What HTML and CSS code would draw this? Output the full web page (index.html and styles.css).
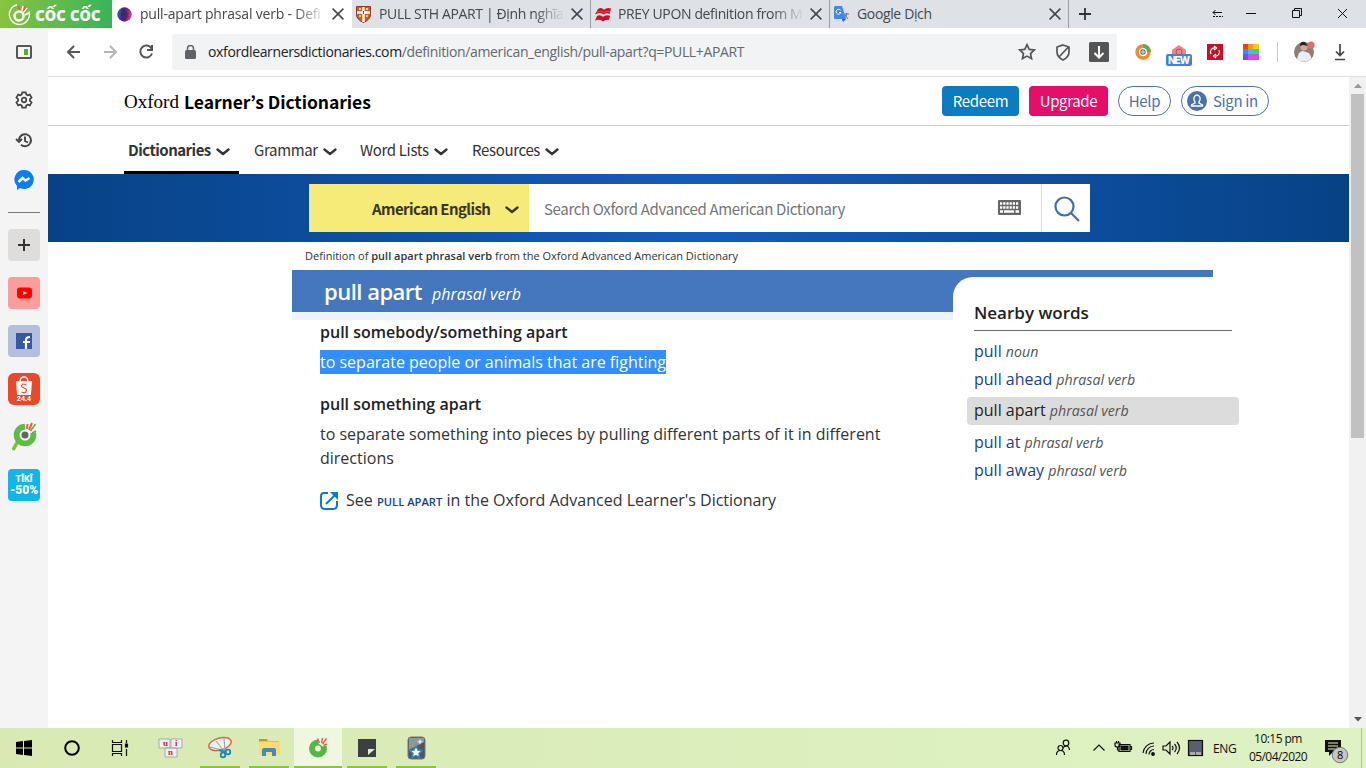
FILE: index.html
```html
<!DOCTYPE html>
<html lang="en">
<head>
<meta charset="utf-8">
<title>pull-apart phrasal verb - Definition</title>
<link rel="stylesheet" href="styles.css">
</head>
<body>
<svg width="0" height="0" class="defs">
  <symbol id="x" viewBox="0 0 12 12"><path d="M.6.6l10.8 10.8M11.4.6L.6 11.4" fill="none" stroke="#444" stroke-width="1.5"/></symbol>
  <symbol id="chev" viewBox="0 0 14 8"><path d="M1.500 1.500L7 6L12.500 1.500" fill="none" stroke="currentColor" stroke-width="2.300" stroke-linecap="round" stroke-linejoin="round"/></symbol>
</svg>
<div class="screen">
  <header class="tabs">
    <div class="brand"><svg width="23" height="23" viewBox="0 0 23 23" fill="none" stroke="#fff"><path d="M9 1.700a10 10 0 1 0 12 7" stroke-width="1.400"/><circle cx="11" cy="13" r="4.500" stroke-width="2.500"/><path d="M14 8l1-5M15 10l4-5M17 12l5-3" stroke-width="1.500"/><path d="M12 7l-2-4M15 8l3-5" stroke="#ef5a45" stroke-width="1.600"/></svg><span>cốc cốc</span></div>
    <div class="tab active"><svg width="15" height="15" viewBox="0 0 15 15"><defs><linearGradient id="ball" x2="1" y2=".2"><stop offset=".1" stop-color="#2c5eb0"/><stop offset=".5" stop-color="#45257c"/><stop offset="1" stop-color="#d52e79"/></linearGradient></defs><circle cx="7.500" cy="7.500" r="7.200" fill="url(#ball)"/><path d="M5 2q6 0 6 7l-3 5-4-5z" fill="#2c2766" opacity=".6"/></svg><span class="tt t1">pull-apart phrasal verb - Defi</span><svg class="close"><use href="#x"/></svg></div>
    <div class="tab"><svg width="15" height="17" viewBox="0 0 15 17"><path d="M.5.5h14v8q0 5-7 8-7-3-7-8z" fill="#d45b29" stroke="#8d3326"/><path d="M7.500 1v15M1 6.500h13" stroke="#fff" stroke-width="2.400"/><path d="M3 3h2M10 3h2M3 10h2M10 10h2" stroke="#f4cf52" stroke-width="2"/><path d="M7 5h1v3H7z" fill="#b23"/></svg><span class="tt t2">PULL STH APART | Định nghĩa</span><svg class="close"><use href="#x"/></svg></div>
    <div class="tab"><svg width="17" height="15" viewBox="0 0 17 15"><path d="M3 2q3-2 5 0l1 .8Q12 0 16 1.500L14.500 7Q12 5.500 9 7.500 5 4.500 0 7.500zM2 9q3-2 6 .8 3-2.500 7-1L14 13q-3-1-6 1.500-3-3-8-.8z" fill="#cc1028"/><path d="M2 5q4-2 7 .500 3-2 6-1" fill="none" stroke="#e3909e" stroke-width=".5"/></svg><span class="tt t3">PREY UPON definition from M</span><svg class="close"><use href="#x"/></svg></div>
    <div class="tab"><svg width="16" height="16" viewBox="0 0 16 16"><path d="M6 5h9v10H9z" fill="#d9dce0"/><path d="M1 0h7l4 13H1q-1 0-1-1V1z" fill="#4285f4"/><path d="M8 13h4l-3 3z" fill="#2459b8"/><path d="M6.800 4.500A2.500 2.500 0 1 0 7 6.500H5" fill="none" stroke="#fff"/><path d="M10 8h5M12.500 7v1q0 3-2 4M11 9l3 4" fill="none" stroke="#6b7780"/></svg><span class="tt t4">Google Dịch</span><svg class="close"><use href="#x"/></svg></div>
    <svg class="plus" width="12" height="12"><path d="M6 0v12M0 6h12" stroke="#333" stroke-width="1.800"/></svg>
    <svg class="wctl" width="140" height="28" fill="none" stroke="#111"><path d="M1 12.500h9M3.500 10l-2.500 2.500 2.500 2.500"/><path d="M1 16.500h10" stroke-dasharray="2 1"/><path d="M34 13.500h10M80.500 10.500h7v7h-7zM82.500 10v-1.500h7v7H88M126 9l9 9M135 9l-9 9"/></svg>
  </header>
  <div class="middle">
    <aside class="side">
      <div class="si"><svg width="16" height="16"><rect x="1" y="2" width="14" height="12" rx="1" fill="none" stroke="#555" stroke-width="2"/><path d="M8 5h4v6H8z" fill="#50b02f"/></svg></div>
      <div class="si s16"><svg width="18" height="18" viewBox="0 0 18 18" fill="none" stroke="#444" stroke-width="1.700"><path d="M7.200 1.300h3.600l.5 2.200 1.300.8 2.200-.7 1.800 3-1.700 1.600v1.600l1.700 1.600-1.800 3-2.200-.7-1.300.8-.5 2.200H7.200l-.5-2.200-1.300-.8-2.200.7-1.800-3 1.700-1.600V8.200L1.400 6.600l1.800-3 2.200.7 1.300-.8z"/><circle cx="9" cy="9" r="2.300"/></svg></div>
      <div class="si s8"><svg width="18" height="16" viewBox="0 0 18 16" fill="none" stroke="#444" stroke-width="1.900"><path d="M4 8a6 6 0 1 1 2 4.700M1 7l3 3 3-3M10 4.500V9l3 1.500"/></svg></div>
      <div class="si s8"><svg width="20" height="21" viewBox="0 0 20 21"><path d="M10 0a9.500 9.500 0 1 1-4 18l-3 2v-4A9.500 9.500 0 0 1 10 0z" fill="#087efb"/><path d="M4.500 12l4-4 3 2.500L15.500 8" fill="none" stroke="#fff" stroke-width="2.500"/></svg></div>
      <i class="rule"></i>
      <div class="si box add"><svg width="12" height="12"><path d="M6 0v12M0 6h12" stroke="#333" stroke-width="2"/></svg></div>
      <div class="si s16 box yt"><svg width="15" height="12"><rect y=".5" width="15" height="11" rx="3" fill="#f00"/><path d="M6 4l4 2-4 2z" fill="#fff"/></svg></div>
      <div class="si s16 box fb"><svg width="16" height="16"><path d="M0 0h16v16H0z" fill="#3758a5"/><path d="M10 16V7q0-3 4-3M7 9h7" fill="none" stroke="#fff" stroke-width="2.200"/></svg></div>
      <div class="si s16 box shop"><svg width="18" height="19" viewBox="0 0 18 19"><path d="M1 5h16l-1 14H2z" fill="#fff"/><path d="M5 6q0-5 4-5t4 5" fill="none" stroke="#fff" stroke-width="1.500"/><path d="M11.500 9Q8 7 6.800 9t2.200 3 2 3.500-4.500.5" fill="none" stroke="#ea4828" stroke-width="1.200"/></svg><b>24.4</b></div>
      <div class="si s16"><svg width="25" height="30" viewBox="0 0 25 30"><path d="M6 19l-5 9" stroke="#82bd3e" stroke-width="3.500"/><circle cx="13" cy="13" r="7.800" fill="none" stroke="#5fbb48" stroke-width="7"/><path d="M14 12L12.500 0H25v10z" fill="#f4f4f4"/><circle cx="13" cy="13" r="4.500" fill="#626466" stroke="#f4f4f4" stroke-width="2"/><path d="M15 7l.5-5M17 8l3-7" stroke="#f0594c" stroke-width="2"/><path d="M18.500 9l5-7M20 11l4-2" stroke="#50b748" stroke-width="1.600"/></svg></div>
      <div class="si s16 box tiki"><b>TÎKÎ</b><strong>-50%</strong></div>
    </aside>
    <main class="browser">
      <div class="toolbar">
        <svg class="navs" width="124" height="48" fill="none" stroke="#555" stroke-width="2"><path d="M32 24H20M26 18l-6 6 6 6"/><path d="M56 24h12M62 18l6 6-6 6" stroke="#b5b5b5"/><path d="M103.500 20.500a6 6 0 1 0 .5 5M104 17v5h-5"/></svg>
        <div class="address"><svg width="12" height="14"><rect y="5" width="11" height="9" rx="1.500" fill="#5f6368"/><path d="M2.500 6V3.500a3 3 0 0 1 6 0V6" fill="none" stroke="#5f6368" stroke-width="1.500"/></svg><span class="url"><b>oxfordlearnersdictionaries.com</b>/definition/american_english/pull-apart?q=PULL+APART</span>
        <svg class="marks" width="96" height="24" viewBox="0 0 96 24" fill="none" stroke="#555" stroke-width="1.700"><path d="M12 4.700l2.200 4.700 5.100.6-3.800 3.500 1 5.100-4.500-2.500-4.500 2.500 1-5.100L4.700 10l5.100-.6z"/><path d="M48 5l6 2v5q0 5-6 8-6-3-6-8V7zM43.500 17.500L53 7.500"/><rect x="74" y="2" width="20" height="20" rx="1.500" fill="#555" stroke="none"/><path d="M84 6v11M79.500 13l4.500 4.500 4.500-4.500" stroke="#fff" stroke-width="2"/></svg></div>
        <svg class="ext" width="236" height="40" viewBox="0 0 236 40"><circle cx="12" cy="20" r="6" fill="none" stroke="#f38b2e" stroke-width="3.500"/><path d="M12 14a6 6 0 0 1 6 6" fill="none" stroke="#59ad51" stroke-width="4"/><circle cx="12" cy="20" r="2.700" fill="#607070"/><path d="M10 20h4M12 18v4" stroke="#ddd"/><path d="M41 23v-5l7-5 7 5v5z" fill="#f38282"/><circle cx="48" cy="20" r="3" fill="none" stroke="#b84e56"/><rect x="35" y="22" width="26" height="12" rx="2" fill="#427eea"/><text x="37" y="32" textLength="22">NEW</text><path d="M76 12h16v16H76z" fill="#c61128"/><path d="M80 22a4 4 0 0 1 4-6M83 14l2.500 2L83 18M88 18a4 4 0 0 1-4 6M85 22l-2.500 2 2.500 2" stroke="#fff" fill="none" stroke-width="1.300"/><path d="M112 12h5v5h-5z" fill="#f83b1d"/><path d="M117 12h5v5h-5z" fill="#ff991b"/><path d="M122 12h6v5h-6z" fill="#f7ca1e"/><path d="M112 17h5v5h-5z" fill="#179dfa"/><path d="M117 17h5v5h-5z" fill="#21cdea"/><path d="M122 17h6v5h-6z" fill="#32dc66"/><path d="M112 22h5v6h-5z" fill="#784cea"/><path d="M117 22h11v6h-11z" fill="#d949ef"/><path d="M146.500 10v20" stroke="#c8c8c8"/><g transform="translate(2)"><circle cx="171" cy="20" r="10" fill="#927b74"/><path d="M164 28q1-9 6-9l6 2q3 4 2 6-6 5-14 1z" fill="#e9ecf0"/><circle cx="171" cy="15" r="3.500" fill="#d9a995"/><path d="M167 14q0-5 5-4l3 4-5-1z" fill="#26242a"/><circle cx="178" cy="13" r="3.500" fill="#f3636b"/></g><path d="M209 12v12M205 19.500l4 4 4-4M204 27.500h10" fill="none" stroke="#444" stroke-width="1.700"/></svg>
      </div>
      <div class="viewport">
        <div class="page">
          <div class="mast"><div class="logo"><span class="ox">Oxford</span><b>Learner’s Dictionaries</b></div>
            <div class="acts"><a class="btn redeem">Redeem</a><a class="btn upgrade">Upgrade</a><a class="btn help">Help</a><a class="btn sign"><svg width="20" height="20"><circle cx="10" cy="10" r="10" fill="#4a72a8"/><path d="M8 11Q6.500 9 7 6.500 8 4 10 4t3 2.500Q13.500 9 12 11v1l3.500 2v1h-11v-1L8 12z" fill="none" stroke="#fff" stroke-width="1.300"/></svg><span>Sign in</span></a></div></div>
          <nav class="nav"><a class="on n1"><span>Dictionaries</span><svg><use href="#chev"/></svg></a><a class="n2"><span>Grammar</span><svg><use href="#chev"/></svg></a><a class="n3"><span>Word Lists</span><svg><use href="#chev"/></svg></a><a class="n4"><span>Resources</span><svg><use href="#chev"/></svg></a></nav>
          <div class="band"><div class="search"><div class="lang"><span>American English</span><svg><use href="#chev"/></svg></div><div class="query"><span>Search Oxford Advanced American Dictionary</span><svg width="23" height="16"><rect y="0" width="23" height="15" rx="1" fill="#666"/><path d="M2 3.500h19M2 7.500h19" stroke="#fff" stroke-width="2.600" stroke-dasharray="2.200 1"/><path d="M2 11.500h3M6 11.500h10M17.500 11.500h3.500" stroke="#fff" stroke-width="2.400"/></svg></div><div class="go"><svg width="26" height="26" fill="none" stroke="#3f70ae" stroke-width="2.200"><circle cx="10.500" cy="10.500" r="9"/><path d="M17 17l8 8"/></svg></div></div></div>
          <p class="crumb"><span>Definition of <b>pull apart phrasal verb</b> from the Oxford Advanced American Dictionary</span></p>
          <div class="entry">
            <section class="def"><h1><span class="hw">pull apart</span><i>phrasal verb</i></h1>
              <h2 class="h2a"><span>pull somebody/something apart</span></h2><p class="selp"><mark>to separate people or animals that are fighting</mark></p>
              <h2 class="h2b"><span>pull something apart</span></h2><p class="body">to separate something into pieces by pulling different parts of it in different<br>directions</p>
              <p class="see"><svg width="18" height="19" viewBox="0 0 18 19" fill="none" stroke="#0b7bc8" stroke-width="2"><path d="M8 2H4Q1 2 1 5v9q0 4 4 4h8q4 0 4-4v-4M6 13L15 4"/><path d="M10 1h8v8z" fill="#0b7bc8" stroke="none"/></svg><span>See <a>PULL APART</a> in the Oxford Advanced Learner's Dictionary</span></p>
            </section>
            <aside class="near"><h3>Nearby words</h3><ul><li><a>pull</a> <i>noun</i></li><li><a>pull ahead</a> <i>phrasal verb</i></li><li class="cur"><a>pull apart</a> <i>phrasal verb</i></li><li><a>pull at</a> <i>phrasal verb</i></li><li><a>pull away</a> <i>phrasal verb</i></li></ul></aside>
          </div>
        </div>
        <div class="scroll"><svg width="17" height="17"><path d="M5 11l4-4.500L13 11z" fill="#999"/></svg><div class="thumb"></div><svg width="17" height="17"><path d="M5 6h8l-4 4.500z" fill="#555"/></svg></div>
      </div>
    </main>
  </div>
  <footer class="task">
    <svg class="t48" viewBox="0 0 48 40"><path d="M16 14l7-1v6.500h-7zM24 13l8-1v7.500h-8zM16 20.500h7V27l-7-1zM24 20.500h8V28l-8-1z"/></svg>
    <svg class="t48" viewBox="0 0 48 40"><circle cx="24" cy="20" r="6.800" fill="none" stroke="#000" stroke-width="2"/></svg>
    <svg class="t48" viewBox="0 0 48 40" fill="none" stroke="#111" stroke-width="1.200"><path d="M16.500 16.500h9v7h-9zM16.500 12v2.500h9V12M16.500 28v-2.500h9V28M30.500 12v3M30.500 21v7"/><path d="M29.500 16h2v3h-2z" fill="#111"/></svg>
    <svg class="t52" viewBox="0 0 52 40"><g fill="#eef0f1" stroke="#a8aaac"><path d="M15 11h11v9H15zM27 11h11v9H27zM21 20h12v9H21z"/></g><text x="19" y="18">u</text><text x="31" y="18">i</text><text x="24" y="27">n</text></svg>
    <svg class="t48 run" viewBox="0 0 48 40"><ellipse cx="24" cy="16" rx="11.500" ry="6" transform="rotate(-15 24 16)" fill="#edf3ef" stroke="#e4604f" stroke-width="1.400"/><path d="M20 13l8 10M28 10l1 13M14 19l12 3" stroke="#9aa6ac" stroke-width="1.200"/><circle cx="27" cy="27" r="2.300" fill="none" stroke="#168bb4" stroke-width="1.800"/><circle cx="32" cy="24" r="2.300" fill="none" stroke="#168bb4" stroke-width="1.800"/><path d="M23 22l6 2" stroke="#168bb4" stroke-width="2"/></svg>
    <svg class="t48 run" viewBox="0 0 48 40"><path d="M14 11h8l2 2h10v14H14z" fill="#f2be38"/><path d="M14 14h21v13H14z" fill="#ffdb6b"/><path d="M14 11h8v2h-8z" fill="#c9971c"/><path d="M17 28v-6q0-2 2-2h10q2 0 2 2v6h-4v-4h-6v4z" fill="#398bd1"/></svg>
    <svg class="t48 cur" viewBox="0 0 48 40"><circle cx="24" cy="20.500" r="6" fill="none" stroke="#50b748" stroke-width="6"/><path d="M25 18l-1-8h9v7.500l-5 1z" fill="#eff7e0"/><circle cx="24" cy="20.500" r="3.700" fill="#eff7e0" stroke="#50b748" stroke-width="1.600"/><path d="M25.500 15l-2-4.500M27.500 15l1-5M28.500 16l4-5.500M29.500 17.500l3.500-1.500" stroke="#f0594c" stroke-width="1.400"/></svg>
    <svg class="t48 run" viewBox="0 0 48 40"><path d="M33 11v18H15V11z" fill="#3c4040"/><path d="M25 27v-6h7z" fill="#e2f1c4"/></svg>
    <svg class="t48 run" viewBox="0 0 48 40"><rect x="16" y="9" width="17" height="22" rx="3" fill="#50565a" stroke="#777"/><path d="M17 10h15v4L17 22z" fill="#90979a"/><path d="M24 18l2 4 4 .5-3 3 .5 4-3.500-2-4 2 1-4-3-3 4-.5z" fill="#fff" stroke="#2988c8" stroke-width="1.500"/><path d="M28 11l1 2 2 .5-2 1-1 2-1-2-2-1 2-.5z" fill="#d7effd"/></svg>
    <svg class="tray" width="157" height="40" fill="none" stroke="#111" stroke-width="1.200"><circle cx="10" cy="15" r="2.800"/><circle cx="4.500" cy="20" r="2.500"/><path d="M.5 27q0-4.500 4-4.500t4 4.500M7 20q1-2 3.500-2t3 4"/><path d="M37.500 22.500l5.500-5.500 5.500 5.500"/><path d="M63 16.500h11v7H63zM74 18.500h1.500v3H74"/><path d="M65 18h7v4h-7z" fill="#111"/><path d="M59 15h5v2q0 2-2.500 2T59 17zM60.500 13v2M62.500 13v2M61.500 19v3h2"/><path d="M87 25a11 11 0 0 1 11-10M90 26a8 8 0 0 1 8-8M93 26.500a5 5 0 0 1 5-5"/><circle cx="97" cy="26" r="1.300" fill="#111"/><path d="M107 18h3l4-4v12l-4-4h-3zM116 18q2 2 0 4M118.500 16q3.500 4 0 8M121 14q5 6 0 12"/><rect x="132.500" y="12.500" width="14" height="15" fill="#59606c"/><path d="M134 24h5v3h-5zM140 24h5v3h-5z" fill="#aaa" stroke="none"/></svg>
    <span class="eng">ENG</span><div class="clock"><span>10:15 pm</span><span>05/04/2020</span></div>
    <svg class="notify" width="42" height="40"><path d="M1 12h16v12H9l-4 4v-4H1z" fill="#111"/><path d="M4 15h10M4 18h10M4 21h7" stroke="#dff1c5"/><circle cx="16" cy="27" r="7.700" fill="#c5c9bf" stroke="#777"/><text x="13" y="31">8</text><path d="M37.500 0v40" stroke="#b0bc9e"/></svg>
  </footer>
</div>
</body>
</html>
```
FILE: styles.css
```css
*{box-sizing:border-box}
body{margin:0;background:#fff;font-family:"Open Sans","Noto Sans",sans-serif;color:#333;overflow:hidden}
svg{display:block;flex:none}
.defs{position:absolute}
p,h1,h2,h3,ul{margin:0;padding:0}
.screen{width:1366px;height:768px;display:flex;flex-direction:column}
.tabs{height:28px;background:#dee1e6;display:flex;align-items:center;flex:none}
.brand{width:112px;height:28px;background:linear-gradient(100deg,#8ac43d,#35b45a);display:flex;align-items:center;gap:4px;padding-left:8px;color:#fff;font:700 19px/29px "Noto Sans",sans-serif;flex:none}
.brand span{white-space:nowrap;letter-spacing:-.4px}
.tab{width:239px;height:28px;display:flex;align-items:center;padding:0 7px 0 4px;border-right:1px solid #9a9da2;background:#dee1e6;flex:none}
.tab.active{width:240px;background:#fff;padding:0 8px 0 5px;border:0}
.tt{flex:1;margin:0 0 0 8px;height:28px;line-height:27px;font-size:14px;letter-spacing:-.36px;white-space:nowrap;color:#45474b}
.t1{letter-spacing:-.2px}
.t1,.t2,.t3{-webkit-mask-image:linear-gradient(90deg,#000 155px,transparent 186px)}
.t3{margin-left:6px}.t4{margin-left:7px}
.close{width:12px;height:12px}
.plus{margin-left:10px}
.wctl{margin-left:auto;margin-right:14px}
.middle{height:700px;display:flex;flex:none}
.side{width:48px;background:#f4f4f4;padding-top:8px;display:flex;flex-direction:column;align-items:center;flex:none}
.si{width:32px;height:32px;display:flex;align-items:center;justify-content:center;flex:none}
.s16{margin-top:16px}.s8{margin-top:8px}
.rule{width:32px;height:1px;background:#777;margin:16px 0}
.box{border-radius:4px}
.add{background:#dfdddb}.yt{background:#f99d9d}.fb{background:#b3bfdc}
.shop{background:#ea4828;border-radius:6px;flex-direction:column;color:#fff;font:700 7px/8px Roboto,sans-serif}
.tiki{background:#10b5ec;flex-direction:column;color:#fff;font:900 9px/10px Roboto,sans-serif}
.tiki strong{font-size:12px;line-height:13px}
.browser{width:1318px}
.toolbar{height:49px;display:flex;align-items:center;border-bottom:1px solid #ddd}
.address{width:945px;height:36px;background:#f1f3f4;border-radius:3px;display:flex;align-items:center;padding:0 6px 0 13px;flex:none}
.url{flex:1;margin-left:11px;font-size:14px;line-height:32px;letter-spacing:-.36px;color:#65686c;white-space:nowrap}
.url b{font-weight:400;color:#202124}
.ext{margin-left:14px}
.ext text{font:800 10px Inter,sans-serif;fill:#fff}
.viewport{height:651px;display:flex}
.page{width:1301px}
.mast,.nav,.btn,.lang,.query{font-family:"Noto Sans CJK KR","Noto Sans CJK JP",sans-serif}
.mast{height:49px;border-bottom:1px solid #ccc;display:flex;justify-content:space-between;padding:0 80px 0 76px;align-items:center}
.logo{color:#000;font-size:17.500px;display:flex;line-height:48px;white-space:nowrap;gap:5px;letter-spacing:-.06px;padding-top:2px}
.ox{font-family:"Liberation Serif",serif;font-size:19px;width:55px;letter-spacing:0}
.acts{display:flex;gap:10px}
.btn{height:30px;line-height:29px;font-size:15px;border-radius:4px;color:#fff;text-align:center;white-space:nowrap;letter-spacing:-.35px}
.redeem{background:#0c7bc0;width:77px}.upgrade{background:#e60e69;width:79px}
.help{border:1px solid #4a72a8;border-radius:15px;width:53px;color:#4a72a8;line-height:28px}
.sign{border:1px solid #4a72a8;border-radius:15px;width:88px;color:#4a72a8;line-height:28px;display:flex;align-items:center;gap:6px;padding-left:5px}
.nav{height:48px;display:flex;padding-left:76px;font-size:15px;letter-spacing:-.35px}
.nav a{height:48px;display:flex;align-items:center;gap:5px;line-height:48px;white-space:nowrap}
.nav svg{width:14px;height:8px;margin-top:3px}
.nav .on{width:115px;border-bottom:3px solid #000;font-weight:700;padding-left:4px;padding-top:3px;margin-right:15px;letter-spacing:-.52px}
.n2{width:106px}.n3{width:112px}
.band{height:68px;background:linear-gradient(90deg,#074286,#145cbb 50%,#074286);padding:10px 0 0 261px}
.search{height:48px;width:781px;display:flex;background:#fff}
.lang{width:220px;background:#f6ea79;display:flex;align-items:center;padding-left:63px;font-size:15px;font-weight:700;color:#3b3520;white-space:nowrap;letter-spacing:-.58px}
.lang span{width:118px}
.lang svg{width:14px;height:8px;margin:4px 0 0 15px}
.query{width:512px;padding-left:15px;display:flex;align-items:center;font-size:15px;color:#757575;white-space:nowrap;letter-spacing:-.35px}
.query span{width:454px}
.go{width:49px;border-left:1px solid #ddd;padding:12px 0 0 12px}
.crumb{height:28px;line-height:28px;font-size:11px;padding-left:257px;white-space:nowrap}
.crumb b{font-weight:600}
.entry{width:947px;margin-left:244px;display:flex;background:linear-gradient(#4577bf,#4577bf) 0 0/921px 42px no-repeat,linear-gradient(#ebf3fd,#ebf3fd) 0 42px/661px 8px no-repeat}
.def{width:661px;font-size:16px;line-height:24px;padding-left:28px;white-space:nowrap}
h1{height:50px;padding-left:4px;color:#fff;line-height:43px;font-size:22px;font-weight:600;display:flex}
.hw{letter-spacing:-.5px}
h1 i{font-size:16px;font-weight:400;line-height:48px;margin-left:10px}
h2{font-size:16px;line-height:24px;font-weight:600;color:#222}
.selp{margin-top:6px}
mark{background:#338fff;color:#fff;display:inline-block;height:24px}
.h2b{margin-top:18px}.body{margin-top:6px}
.see{margin-top:18px;display:flex;align-items:center;gap:8px}
.see svg{margin-top:-2px}
.see a{font-size:11.200px;font-weight:600;color:#123f91}
.near{margin-top:7px;width:286px;height:260px;background:#fff;border-top-left-radius:20px;padding:24px 0 0 14px}
h3{font-size:17px;line-height:24px;font-weight:600;color:#222;margin:0 7px;border-bottom:1px solid #666;height:30px}
ul{list-style:none;margin-top:7px}
li{height:28px;line-height:27px;font-size:16px;padding-left:7px;white-space:nowrap}
li a{color:#173f9b}li i{font-size:14.200px;color:#555}
.cur a{color:#222}li.cur{background:#dcdcdc;border-radius:4px;margin:3px 0 4px}
.scroll{width:17px;background:#f1f1f1;display:flex;flex-direction:column;flex:none}
.thumb{height:344px;margin:0 2px;background:#c1c1c1}
.scroll svg:last-child{margin-top:auto}
.task{height:40px;background:linear-gradient(90deg,#d8e9b3,#dff2c4);display:flex;align-items:center;flex:none;color:#111}
.t48{width:48px;height:40px}.t52{width:52px;height:40px}
.t52 text{font:700 9px "Liberation Serif",serif;fill:#dc2333}
.run{background:linear-gradient(#8ac72c,#8ac72c) center bottom/40px 2px no-repeat}
.task .cur{background:linear-gradient(#8ac72c,#8ac72c) bottom/48px 2px no-repeat,#eff7e0}
.run+.cur,.run+.run,.cur+.run{margin-left:1px}
.tray{margin-left:auto}
.eng{font-size:12px;width:24px;letter-spacing:-.3px}
.clock{width:82px;display:flex;flex-direction:column;text-align:center;font-size:12px;line-height:18px;letter-spacing:-.55px}
.notify{margin-left:5px}
.notify text{font:11px "Open Sans",sans-serif}
```
